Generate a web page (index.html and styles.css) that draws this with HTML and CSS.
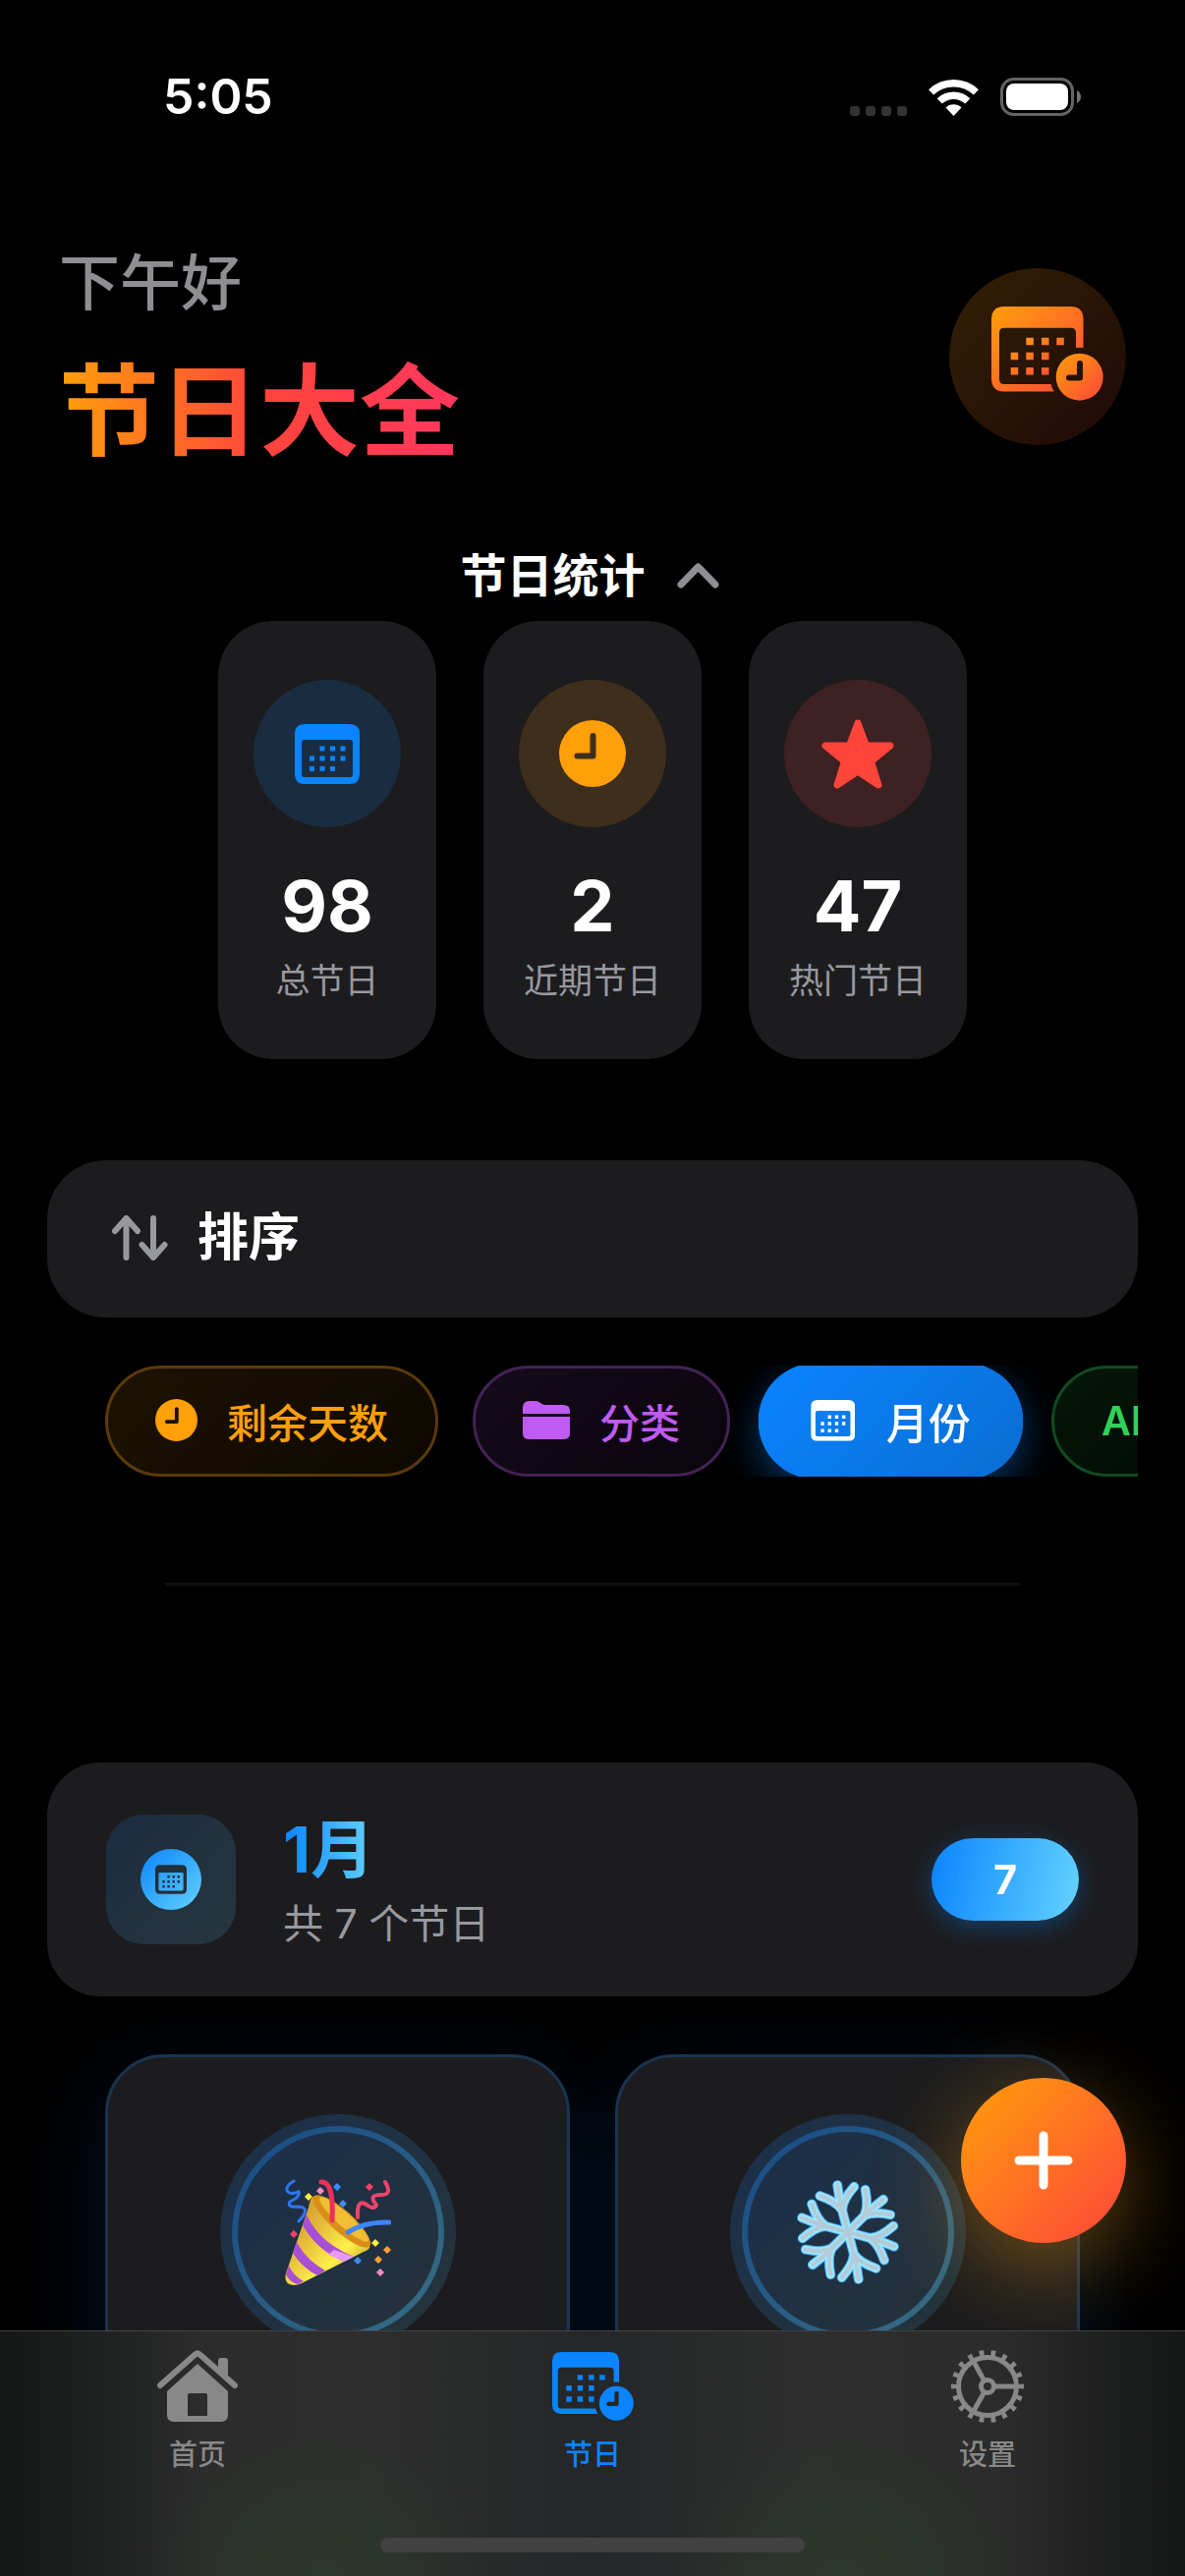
FILE: index.html
```html
<!DOCTYPE html>
<html lang="zh-CN">
<head>
    <meta charset="UTF-8" />
    <meta name="viewport" content="width=device-width, initial-scale=1" />
    <title>节日大全</title>
    <link rel="stylesheet" href="styles.css">
</head>
<body>
    <!-- Shared icons -->
    <svg class="sprite" aria-hidden="true">
        <defs>
            <linearGradient id="orangeGradient" x1="0" y1="0" x2="1" y2="1">
                <stop offset="0" stop-color="#ff9f0a" />
                <stop offset="1" stop-color="#ff453a" />
            </linearGradient>
            <linearGradient id="blueGradient" x1="0" y1="0" x2="1" y2="1">
                <stop offset="0" stop-color="#0a84ff" />
                <stop offset="1" stop-color="#64d2ff" />
            </linearGradient>
            <linearGradient id="coneGradient" x1="0" y1="0" x2="1" y2="1">
                <stop offset="0" stop-color="#c98a1c" />
                <stop offset="0.35" stop-color="#e3b63a" />
                <stop offset="0.65" stop-color="#fff04a" />
                <stop offset="1" stop-color="#b07a16" />
            </linearGradient>
            <mask id="clockHands">
                <rect width="68" height="68" fill="#fff" />
                <path d="M34.5 16V36.5H18.5" fill="none" stroke="#000" stroke-width="6" stroke-linecap="round" stroke-linejoin="round" />
            </mask>
            <mask id="clockCut">
                <rect width="114" height="96" fill="#fff" />
                <circle cx="89.7" cy="71.7" r="30" fill="#000" />
            </mask>
            <mask id="smallHands">
                <rect width="114" height="96" fill="#fff" />
                <path d="M90 58V72.5H79" fill="none" stroke="#000" stroke-width="6" stroke-linecap="round" stroke-linejoin="round" />
            </mask>
        </defs>
        <symbol id="calendar" viewBox="0 0 66 61">
            <path fill-rule="evenodd" d="M10 0H56Q66 0 66 10V51Q66 61 56 61H10Q0 61 0 51V10Q0 0 10 0ZM10 16Q7 16 7 19V51Q7 54 10 54H56Q59 54 59 51V19Q59 16 56 16Z" />
            <path d="M25.500 22.500h5v5h-5zM36 22.500h5v5h-5zM46.500 22.500h5v5h-5zM15 32.500h5v5h-5zM25.500 32.500h5v5h-5zM36 32.500h5v5h-5zM46.500 32.500h5v5h-5zM15 43h5v5h-5zM25.500 43h5v5h-5zM36 43h5v5h-5z" />
        </symbol>
        <symbol id="clock" viewBox="0 0 68 68">
            <circle cx="34" cy="34" r="34" mask="url(#clockHands)" />
        </symbol>
        <symbol id="calendarClock" viewBox="0 0 114 96">
            <path mask="url(#clockCut)" fill-rule="evenodd" d="M13 0H80.500Q93.500 0 93.500 13V73.500Q93.500 86.500 80.500 86.500H13Q0 86.500 0 73.500V13Q0 0 13 0ZM13 21.700Q8 21.700 8 26.700V74Q8 79 13 79H81Q86 79 86 74V26.700Q86 21.700 81 21.700Z" />
            <path d="M35.300 31.700h7.500v7.500h-7.500zM51 31.700h7.500v7.500h-7.500zM66.300 31.700h7.500v7.500h-7.500zM19.700 46.700h7.500v7.500h-7.500zM35.300 46.700h7.500v7.500h-7.500zM51 46.700h7.500v7.500h-7.500zM19.700 62h7.500v7.500h-7.500zM35.300 62h7.500v7.500h-7.500zM51 62h7.500v7.500h-7.500z" />
            <circle cx="89.700" cy="71.700" r="24" mask="url(#smallHands)" />
        </symbol>
    </svg>

    <div class="status-bar">
        <span class="status-time">5:05</span>
        <div class="status-icons">
            <svg class="signal-icon" viewBox="0 0 58 10">
                <rect width="10" height="10" rx="3" />
                <rect x="16" width="10" height="10" rx="3" />
                <rect x="32" width="10" height="10" rx="3" />
                <rect x="48" width="10" height="10" rx="3" />
            </svg>
            <svg class="wifi-icon" viewBox="0 0 51 37">
                <path d="M2.600 12.900A33.300 33.300 0 0 1 48.400 12.900M11.200 21.900A20.800 20.800 0 0 1 39.800 21.900" fill="none" stroke="#fff" stroke-width="7.400" />
                <path d="M25.500 37L17.500 28.500A11.700 11.700 0 0 1 33.500 28.500Z" fill="#fff" />
            </svg>
            <svg class="battery-icon" viewBox="0 0 82 39">
                <rect x="1.500" y="1.500" width="72" height="36" rx="12" fill="none" stroke="#636363" stroke-width="3" />
                <rect x="6" y="6" width="63" height="27" rx="8" fill="#fff" />
                <path d="M78 13Q82 15 82 19.500Q82 24 78 26Z" fill="#737373" />
            </svg>
        </div>
    </div>

    <main>
        <header class="page-header">
            <div>
                <p class="greeting">下午好</p>
                <h1>节日大全</h1>
            </div>
            <div class="header-icon">
                <svg viewBox="0 0 114 96"><use href="#calendarClock" /></svg>
            </div>
        </header>

        <section class="stats">
            <button type="button" class="stats-toggle">
                节日统计
                <svg viewBox="0 0 43 26"><path d="M4 22L21.500 4L39 22" /></svg>
            </button>
            <div class="stats-cards">
                <div class="stat-card blue">
                    <div class="stat-icon"><svg class="icon-calendar" viewBox="0 0 66 61"><use href="#calendar" /></svg></div>
                    <strong>98</strong>
                    <span>总节日</span>
                </div>
                <div class="stat-card orange">
                    <div class="stat-icon"><svg class="icon-clock" viewBox="0 0 68 68"><use href="#clock" /></svg></div>
                    <strong>2</strong>
                    <span>近期节日</span>
                </div>
                <div class="stat-card red">
                    <div class="stat-icon">
                        <svg class="icon-star" viewBox="0 0 74 71">
                            <path d="M37 4L45.500 27H70L50.500 43L58 67L37 53L16 67L23.500 43L4 27H28.500Z" stroke="currentColor" stroke-width="7" stroke-linejoin="round" />
                        </svg>
                    </div>
                    <strong>47</strong>
                    <span>热门节日</span>
                </div>
            </div>
        </section>

        <section class="sort">
            <h2 class="sort-bar">
                <svg viewBox="0 0 57 46"><path d="M14.500 43V3M3 16L14.500 3L26 16M42 3V43M30.500 30L42 43L53.500 30" /></svg>
                排序
            </h2>
            <div class="chips">
                <button type="button" class="chip orange">
                    <svg class="chip-clock" viewBox="0 0 68 68"><use href="#clock" /></svg>
                    剩余天数
                </button>
                <button type="button" class="chip purple">
                    <svg class="chip-folder" viewBox="0 0 48 39">
                        <path d="M0 13V7Q0 0 7 0H13Q16 0 18 2Q20 4 23 4H41Q48 4 48 10V13ZM0 16H48V33Q48 39 41 39H7Q0 39 0 33Z" />
                    </svg>
                    分类
                </button>
                <button type="button" class="chip active">
                    <svg class="chip-calendar" viewBox="0 0 66 61"><use href="#calendar" /></svg>
                    月份
                </button>
                <button type="button" class="chip green">AI</button>
            </div>
        </section>

        <hr>

        <section class="month">
            <div class="month-header">
                <div class="month-icon">
                    <svg viewBox="0 0 62 62">
                        <circle cx="31" cy="31" r="31" fill="url(#blueGradient)" />
                        <use href="#calendar" x="15" y="16" width="32" height="30" fill="#21303d" />
                    </svg>
                </div>
                <div class="month-title">
                    <h2>1月</h2>
                    <p>共 7 个节日</p>
                </div>
                <span class="count">7</span>
            </div>

            <div class="holiday-grid">
                <article class="holiday-card">
                    <div class="holiday-icon">
                        <svg viewBox="0 0 108 108">
                            <path d="M30 17Q26 18 24 29L1 96Q-2 107 9 108Q12 108 17 106L80 74Q88 71 86 67Z" fill="url(#coneGradient)" />
                            <ellipse cx="58" cy="43" rx="38" ry="11" transform="rotate(42 58 43)" fill="#d98f17" />
                            <ellipse cx="60" cy="41" rx="33" ry="7" transform="rotate(42 60 41)" fill="#f0bd35" />
                            <path d="M22 36Q34 64 70 79L60 84Q32 72 18 47Z" fill="#a94fd6" />
                            <path d="M12 64Q21 82 41 93L33 98Q17 90 8 75Z" fill="#a94fd6" />
                            <path d="M4 88Q8 98 19 104L13 107Q5 105 1 97Z" fill="#a94fd6" />
                            <path d="M50 72L70 79L60 84L44 77Z" fill="#e89aff" />
                            <g fill="none" stroke-linecap="round">
                                <path d="M9 2Q-1 8 3 13Q6 16 14 13Q16 18 5 23Q2 29 12 28Q28 28 14 43" stroke="#2f74f5" stroke-width="3" />
                                <path d="M37 3Q50 2 48 42" stroke="#ee2f59" stroke-width="5" />
                                <path d="M102 3Q110 16 98 16Q84 16 93 26Q91 32 83 26Q73 19 74 39" stroke="#f0436b" stroke-width="4" />
                                <path d="M64 54Q82 43 106 44" stroke="#3f84fb" stroke-width="5" />
                            </g>
                            <path d="M24 14l4 4l-4 4l-4-4zM92 61l4 4l-4 4l-4-4z" fill="#ffec3e" />
                            <path d="M36 8l4 4l-4 4l-4-4zM97 91l4 4l-4 4l-4-4z" fill="#fb8fc0" />
                            <path d="M53 4l4 4l-4 4l-4-4zM59 21l4 4l-4 4l-4-4zM74 79l4 4l-4 4l-4-4z" fill="#3c8cfb" />
                            <path d="M86 4l4 4l-4 4l-4-4zM9 52l4 4l-4 4l-4-4z" fill="#ee4266" />
                            <path d="M104 68l4 4l-4 4l-4-4zM95 78l4 4l-4 4l-4-4z" fill="#fba03c" />
                        </svg>
                    </div>
                </article>
                <article class="holiday-card">
                    <div class="holiday-icon">
                        <svg viewBox="-54 -54 108 108">
                            <defs>
                                <path id="arm" d="M0 0H31L49 2M23 0Q33 -3 43 -18M23 0Q33 3 43 18" />
                                <g id="flake">
                                    <use href="#arm" transform="rotate(15)" />
                                    <use href="#arm" transform="rotate(75)" />
                                    <use href="#arm" transform="rotate(135)" />
                                    <use href="#arm" transform="rotate(195)" />
                                    <use href="#arm" transform="rotate(255)" />
                                    <use href="#arm" transform="rotate(315)" />
                                </g>
                            </defs>
                            <g fill="none" stroke-linecap="round">
                                <use href="#flake" stroke="#4aa9f2" stroke-width="10" />
                                <use href="#flake" stroke="#9be6ff" stroke-width="8" />
                                <use href="#flake" stroke="#b3cbd9" stroke-width="4" />
                            </g>
                        </svg>
                    </div>
                </article>
            </div>
        </section>
    </main>

    <button type="button" class="add-button" aria-label="添加节日">
        <svg viewBox="0 0 60 60"><path d="M30 5V55M5 30H55" /></svg>
    </button>

    <nav class="tab-bar">
        <a href="#home">
            <svg class="tab-home" viewBox="0 0 82 74">
                <path d="M3 36L38 5Q41 2 44 5L79 36" fill="none" stroke="currentColor" stroke-width="6" stroke-linecap="round" />
                <path d="M62 23V11Q62 8 65 8H69Q72 8 72 11V31Z" />
                <path fill-rule="evenodd" d="M41 14L72 42V66Q72 73 65 73H17Q10 73 10 66V42ZM33 44Q31 44 31 46V67H51V46Q51 44 49 44Z" />
            </svg>
            首页
        </a>
        <a href="#holidays" class="current">
            <svg class="tab-holiday" viewBox="0 0 114 96"><use href="#calendarClock" /></svg>
            节日
        </a>
        <a href="#settings">
            <svg class="tab-gear" viewBox="-38 -38 76 76">
                <g fill="none" stroke="currentColor">
                    <circle r="34" stroke-width="6" pathLength="180" stroke-dasharray="4 6" stroke-dashoffset="2" />
                    <circle r="29.500" stroke-width="5" />
                    <circle r="6.500" stroke-width="5" />
                    <path d="M8 0H28M-4 -7L-14 -25M-4 7L-14 25" stroke-width="5" />
                </g>
            </svg>
            设置
        </a>
        <div class="home-indicator"></div>
    </nav>
</body>
</html>
```
FILE: styles.css
```css
* {
    box-sizing: border-box;
}

body {
    margin: 0;
    height: 100vh;
    display: flex;
    flex-direction: column;
    position: relative;
    overflow: hidden;
    background-color: #000;
    color: #fff;
    font-family: Inter, 'Noto Sans CJK SC', sans-serif;
}

h1, h2, p {
    margin: 0;
}

button {
    font-family: inherit;
    color: inherit;
    border: none;
    background: none;
    cursor: pointer;
}

svg {
    display: block;
    flex-shrink: 0;
    fill: currentColor;
}

.sprite {
    position: absolute;
    width: 0;
    height: 0;
}

/* Status bar */
.status-bar {
    display: flex;
    justify-content: space-between;
    align-items: center;
    height: 196px;
    padding: 0 106px 0 166px;
    flex-shrink: 0;
}

.status-time {
    font-size: 50px;
    line-height: 60px;
    font-weight: 600;
}

.status-icons {
    display: flex;
    align-items: flex-end;
    gap: 22px;
}

.signal-icon {
    width: 58px;
    height: 10px;
    fill: #333;
}

.wifi-icon {
    width: 51px;
    height: 37px;
}

.battery-icon {
    width: 82px;
    height: 39px;
}

main {
    flex: 1;
    min-height: 0;
    overflow: hidden;
}

/* Header */
.page-header {
    display: flex;
    justify-content: space-between;
    align-items: center;
    padding: 51px 60px 0;
}

.greeting {
    font-size: 62px;
    line-height: 84px;
    font-weight: 500;
    color: #8e8e93;
    margin-bottom: 28px;
}

h1 {
    font-size: 102px;
    line-height: 120px;
    font-weight: 700;
    background: linear-gradient(90deg, #ff9f0a, #ff453a 50%, #ff375f);
    -webkit-background-clip: text;
    background-clip: text;
    color: transparent;
}

.header-icon {
    display: flex;
    align-items: center;
    justify-content: center;
    width: 180px;
    height: 180px;
    padding: 0 0 6px 20px;
    border-radius: 50%;
    background: linear-gradient(135deg, #332005, #1f0907);
}

.header-icon svg {
    width: 114px;
    height: 96px;
    fill: url(#orangeGradient);
}

/* Stats */
.stats {
    display: flex;
    flex-direction: column;
    align-items: center;
    padding-top: 71px;
}

.stats-toggle {
    display: flex;
    align-items: center;
    gap: 32px;
    padding: 0 6px 0 0;
    margin-bottom: 10px;
    font-size: 47px;
    line-height: 72px;
    font-weight: 700;
}

.stats-toggle svg {
    width: 43px;
    height: 26px;
    fill: none;
    stroke: #8e8e93;
    stroke-width: 7px;
    stroke-linecap: round;
    stroke-linejoin: round;
}

.stats-cards {
    display: flex;
    gap: 48px;
}

.stat-card {
    display: flex;
    flex-direction: column;
    align-items: center;
    width: 222px;
    height: 446px;
    padding-top: 60px;
    border-radius: 56px;
    background-color: #1c1c1e;
}

.stat-icon {
    display: flex;
    align-items: center;
    justify-content: center;
    width: 150px;
    height: 150px;
    margin-bottom: 38px;
    border-radius: 50%;
}

.stat-card.blue .stat-icon {
    color: #0a84ff;
    background-color: #1a2c40;
}

.stat-card.orange .stat-icon {
    color: #ff9f0a;
    background-color: #3e2e1b;
}

.stat-card.red .stat-icon {
    color: #ff453a;
    background-color: #3e2122;
}

.icon-calendar {
    width: 66px;
    height: 61px;
}

.icon-clock {
    width: 68px;
    height: 68px;
}

.icon-star {
    width: 74px;
    height: 71px;
}

.stat-card strong {
    font-size: 72px;
    line-height: 84px;
    font-weight: 700;
}

.stat-card span {
    margin-top: 10px;
    font-size: 35px;
    line-height: 48px;
    color: #98989f;
}

/* Sorting */
.sort {
    margin: 103px 48px 0;
}

.sort-bar {
    display: flex;
    align-items: center;
    gap: 30px;
    height: 160px;
    padding: 0 66px 2px;
    border-radius: 60px;
    background-color: #1c1c1e;
    font-size: 52px;
    line-height: 72px;
    font-weight: 700;
}

.sort-bar svg {
    width: 57px;
    height: 46px;
    fill: none;
    stroke: #98989f;
    stroke-width: 6px;
    stroke-linecap: round;
    stroke-linejoin: round;
}

.chips {
    display: flex;
    gap: 35px;
    margin-top: 49px;
    padding-left: 59px;
    overflow: hidden;
}

.chip {
    display: flex;
    align-items: center;
    gap: 30px;
    flex-shrink: 0;
    height: 113px;
    padding: 0 48px 2px;
    border: 3px solid;
    border-radius: 57px;
    font-size: 41px;
    font-weight: 500;
}

.chip.orange {
    color: #ff9f0a;
    border-color: #5a3a08;
    background: linear-gradient(135deg, #1d1202, #0d0801);
}

.chip.purple {
    color: #bf5af2;
    border-color: #442256;
    background: linear-gradient(135deg, #150a1a, #0a050d);
}

.chip.green {
    color: #30d158;
    border-color: #124a20;
    background: linear-gradient(135deg, #05170a, #020a04);
    font-weight: 600;
}

.chip.active {
    color: #fff;
    border-color: transparent;
    background: linear-gradient(135deg, #0a84ff, #0a6dd3) border-box;
    box-shadow: 0 12px 36px rgba(10, 132, 255, 0.4);
    transform: scale(1.05);
}

.chip-clock {
    width: 43px;
    height: 43px;
}

.chip-folder {
    width: 48px;
    height: 39px;
}

.chip-calendar {
    width: 43px;
    height: 40px;
}

hr {
    height: 3px;
    margin: 108px 168px 180px;
    border: none;
    background-color: #101011;
}

/* Month */
.month {
    margin: 0 48px;
}

.month-header {
    display: flex;
    align-items: center;
    height: 238px;
    padding: 0 60px;
    border-radius: 54px;
    background-color: #1c1c1e;
}

.month-icon {
    display: flex;
    align-items: center;
    justify-content: center;
    width: 132px;
    height: 132px;
    border-radius: 38px;
    background: linear-gradient(135deg, #1b2b41, #26373f);
}

.month-icon svg {
    width: 62px;
    height: 62px;
}

.month-title {
    flex: 1;
    display: flex;
    flex-direction: column;
    align-items: flex-start;
    margin-left: 48px;
}

.month-title h2 {
    font-size: 65px;
    line-height: 90px;
    font-weight: 700;
    background: linear-gradient(90deg, #0a84ff, #64d2ff);
    -webkit-background-clip: text;
    background-clip: text;
    color: transparent;
}

.month-title p {
    font-size: 41px;
    line-height: 60px;
    color: #98989f;
}

.count {
    width: 150px;
    border-radius: 42px;
    background: linear-gradient(100deg, #0a84ff, #64d2ff);
    box-shadow: 0 6px 24px rgba(10, 132, 255, 0.35);
    font-size: 41px;
    line-height: 84px;
    font-weight: 700;
    text-align: center;
}

.holiday-grid {
    display: grid;
    grid-template-columns: 1fr 1fr;
    gap: 46px;
    padding: 59px 59px 0;
}

.holiday-card {
    display: flex;
    justify-content: center;
    height: 540px;
    padding-top: 58px;
    border: 3px solid #1a3450;
    border-radius: 60px;
    background-color: #1c1c1e;
    box-shadow: 0 24px 90px rgba(10, 132, 255, 0.14);
}

.holiday-icon {
    display: flex;
    align-items: center;
    justify-content: center;
    position: relative;
    width: 240px;
    height: 240px;
    border-radius: 50%;
    background: linear-gradient(135deg, #1b2f4b, #24343a);
}

/* Gradient ring inside the circle */
.holiday-icon::before {
    content: '';
    position: absolute;
    inset: 12px;
    border: 6px solid transparent;
    border-radius: 50%;
    background: linear-gradient(135deg, #1b2f4b, #24323a) padding-box,
        linear-gradient(135deg, #174a86, #396d82) border-box;
}

.holiday-icon svg {
    position: relative;
    width: 108px;
    height: 108px;
}

.add-button {
    position: absolute;
    right: 60px;
    bottom: 339px;
    display: flex;
    align-items: center;
    justify-content: center;
    width: 168px;
    height: 168px;
    padding: 0;
    border-radius: 50%;
    background: linear-gradient(135deg, #ff9f0a, #ff453a);
    box-shadow: 0 24px 90px rgba(255, 159, 10, 0.4);
}

.add-button svg {
    width: 60px;
    height: 60px;
    stroke: #fff;
    stroke-width: 9px;
    stroke-linecap: round;
}

/* Bottom tabs */
.tab-bar {
    display: grid;
    grid-template-columns: repeat(3, 1fr);
    grid-template-rows: 1fr auto;
    position: relative;
    flex-shrink: 0;
    height: 250px;
    padding-bottom: 24px;
    border-top: 1px solid #424242;
    background:
        radial-gradient(ellipse 180px 150px at 27% 100%, rgba(44, 58, 44, 0.8), transparent),
        radial-gradient(ellipse 180px 150px at 71% 100%, rgba(44, 58, 44, 0.8), transparent),
        linear-gradient(90deg, #151716, #1d1f1f 7%, #2b2c2b 17%, #2d2e2d 32%, #242628 50%, #2d2e2d 68%, #2b2c2b 84%, #1d1e1e 94%, #151716);
}

.tab-bar a {
    display: flex;
    flex-direction: column;
    align-items: center;
    padding-top: 18px;
    color: #888;
    font-size: 29px;
    line-height: 36px;
    font-weight: 500;
    text-decoration: none;
}

.tab-bar a.current {
    color: #0a84ff;
}

.tab-bar svg {
    height: 76px;
    margin-bottom: 14px;
}

.tab-home {
    width: 82px;
}

.tab-holiday {
    width: 83px;
}

.tab-gear {
    width: 76px;
}

.home-indicator {
    grid-column: 1 / -1;
    justify-self: center;
    width: 432px;
    height: 15px;
    border-radius: 8px;
    background-color: #404140;
}
```
